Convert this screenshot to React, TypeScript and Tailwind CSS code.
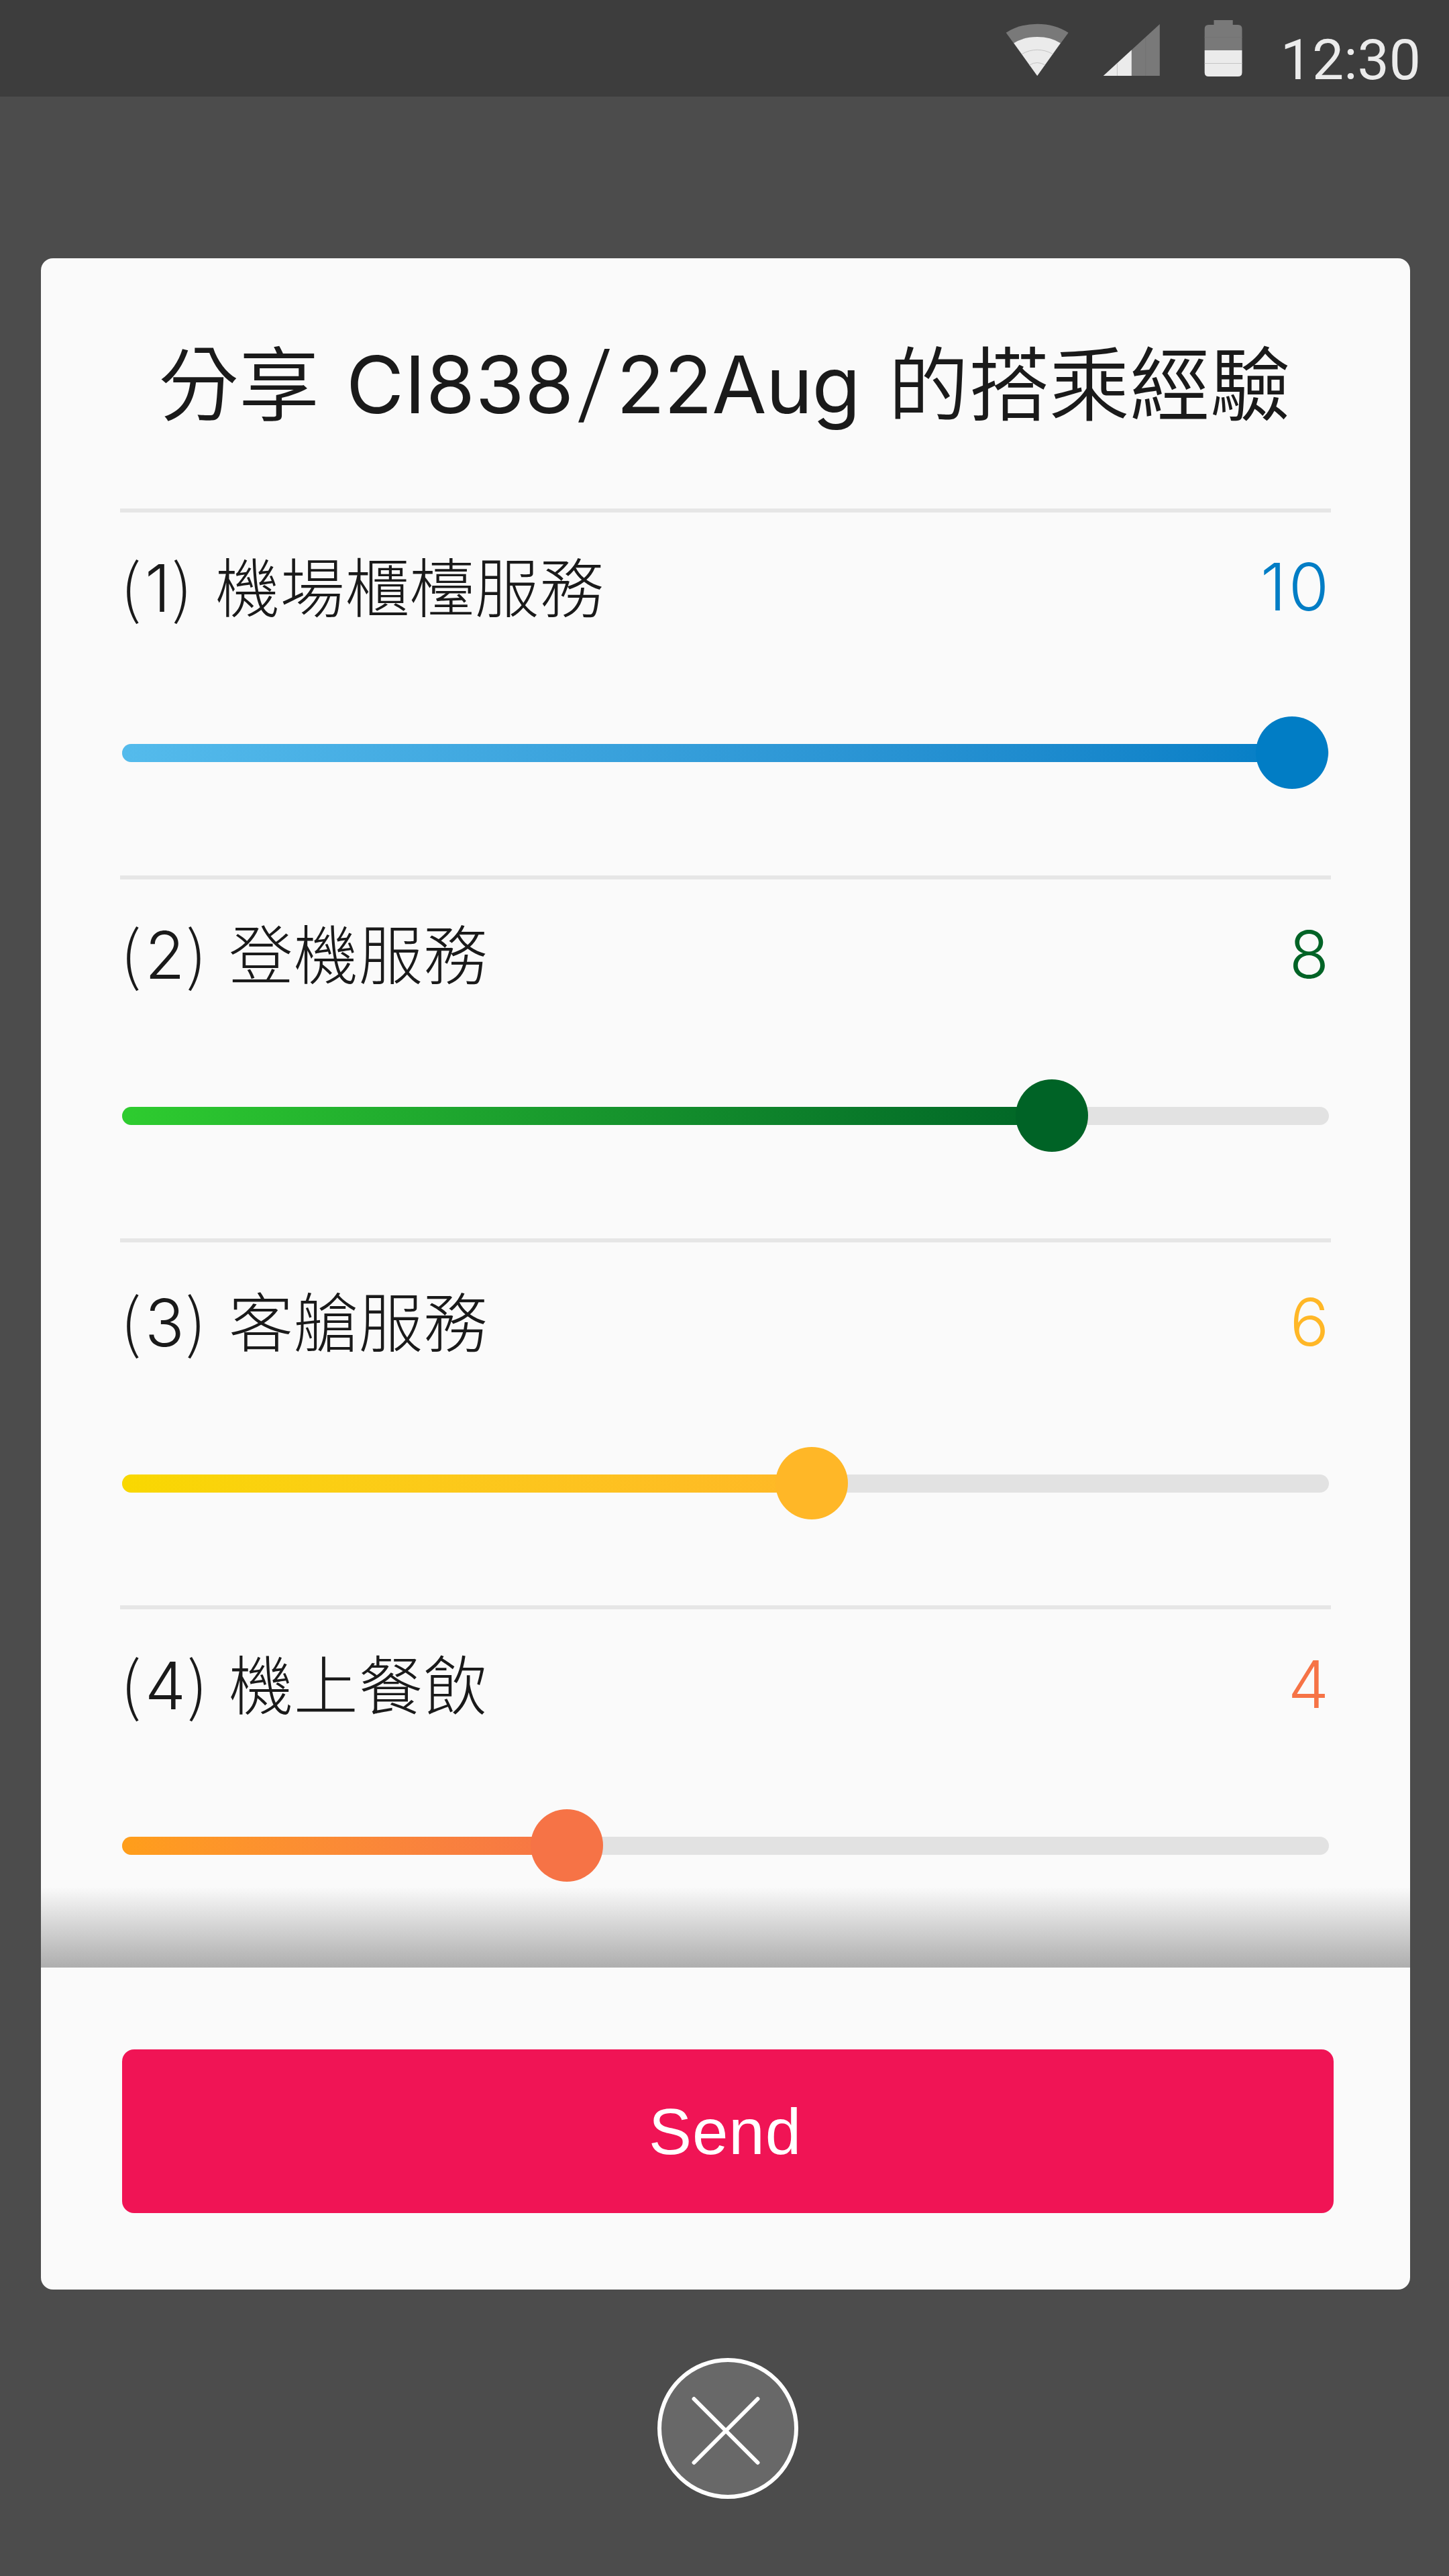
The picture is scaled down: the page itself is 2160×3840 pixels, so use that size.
type Question = {
  index: number;
  label: string;
  score: number;
  rowClass: string;
  indexClass: string;
  valueClass: string;
  sliderClass: string;
  fillClass: string;
  knobClass: string;
  knobCenter: number;
};

const KNOB_SIZE = 108;

const QUESTIONS: Question[] = [
  {
    index: 1,
    label: '機場櫃檯服務',
    score: 10,
    rowClass: 'h-[547px] pt-[59px]',
    indexClass: 'w-[139px]',
    valueClass: 'text-[#017dc5] tracking-[4px] -mr-[4px] -top-[2px]',
    sliderClass: 'mt-[149px]',
    fillClass: 'from-[#54bbec] to-[#017dc5]',
    knobClass: 'bg-[#017dc5]',
    knobCenter: 1744,
  },
  {
    index: 2,
    label: '登機服務',
    score: 8,
    rowClass: 'h-[541px] pt-[59px]',
    indexClass: 'w-[159px]',
    valueClass: 'text-[#006326] -top-[1px]',
    sliderClass: 'mt-[143px]',
    fillClass: 'from-[#2ecc2f] to-[#006326]',
    knobClass: 'bg-[#006326]',
    knobCenter: 1386,
  },
  {
    index: 3,
    label: '客艙服務',
    score: 6,
    rowClass: 'h-[547px] pt-[66px]',
    indexClass: 'w-[159px]',
    valueClass: 'text-[#ffb727] -top-[1px]',
    sliderClass: 'mt-[143px]',
    fillClass: 'from-[#f9d800] to-[#ffb727]',
    knobClass: 'bg-[#ffb727]',
    knobCenter: 1028,
  },
  {
    index: 4,
    label: '機上餐飲',
    score: 4,
    rowClass: 'h-[420px] pt-[60px]',
    indexClass: 'w-[159px]',
    valueClass: 'text-[#f67346] -top-[2px]',
    sliderClass: 'mt-[142px]',
    fillClass: 'from-[#ff9e1a] to-[#f67346]',
    knobClass: 'bg-[#f67346]',
    knobCenter: 663,
  },
];

function StatusBar() {
  return (
    <div className="flex h-[144px] shrink-0 items-start justify-end bg-[#3d3d3d] pr-[42px] text-[#ebebeb]">
      <svg className="mt-[30px] h-[90px] w-[94px]" viewBox="1499 30 94 90">
        <path d="M1546.2 113 L1499.7 48.7 Q1520 35.7 1546.2 35.7 T1592.6 48.7 Z" fill="#797979" />
        <path d="M1546.2 113 L1511.3 64.3 Q1526 55 1546.2 55 T1580.8 64.3 Z" fill="#ebebeb" />
        <path d="M1523.2 80.6 Q1534 74.3 1546.2 74.3 T1569.4 80.6" fill="none" stroke="#c4c4c4" />
        <path d="M1534.5 97 Q1540 93.5 1546.2 93.5 T1558 97" fill="none" stroke="#c4c4c4" />
      </svg>
      <svg className="ml-[51px] mt-[30px] h-[90px] w-[86px]" viewBox="1644 30 86 90">
        <path d="M1644.8 113 L1728.8 36 V113 Z" fill="#797979" />
        <path d="M1644.8 113 L1686.8 74.5 V113 Z" fill="#ebebeb" />
        <path d="M1665.4 94.5 V113" stroke="#c4c4c4" />
        <path d="M1707.8 56 V113" stroke="#737373" />
      </svg>
      <svg className="ml-[65px] mt-[30px] h-[90px] w-[58px]" viewBox="1795 30 58 90">
        <path d="M1809.5 30 H1837.7 V37 H1845.5 Q1851.5 37 1851.5 43 V75 H1795.7 V43 Q1795.7 37 1801.7 37 H1809.5 Z" fill="#797979" />
        <path d="M1795.7 75 H1851.5 V108 Q1851.5 114 1845.5 114 H1801.7 Q1795.7 114 1795.7 108 Z" fill="#ebebeb" />
        <path d="M1795.7 94.5 H1851.5" stroke="#c4c4c4" />
        <path d="M1795.7 55.5 H1851.5" stroke="#737373" />
      </svg>
      <span className="ml-[56px] mt-[48px] font-['Roboto',sans-serif] text-[84px] leading-[84px]">12:30</span>
    </div>
  );
}

function QuestionRow({ q }: { q: Question }) {
  return (
    <section className={`flex flex-col border-t-[6px] border-[#e6e6e6] pl-[3px] pr-[3px] ${q.rowClass}`}>
      <div className="flex h-[96px] items-baseline font-['Noto_Sans_CJK_TC',sans-serif] text-[96px] leading-[96px] font-light text-[#1a1a1a]">
        <span className={`flex shrink-0 items-baseline ${q.indexClass}`}>
          <span className="-ml-[2px] w-[36px]">(</span>
          <span className="font-['Inter',sans-serif] text-[97px]">{q.index}</span>
          <span className="ml-[2px]">)</span>
        </span>
        <span className="grow tracking-[0.7px]">{q.label}</span>
        <span className={`relative font-['Inter',sans-serif] text-[97px] ${q.valueClass}`}>{q.score}</span>
      </div>
      <div className={`relative flex h-[108px] w-[1799px] items-center ${q.sliderClass}`}>
        <div className="h-[27px] w-full overflow-hidden rounded-full bg-[#e2e2e2]">
          <div
            className={`h-full bg-linear-to-r ${q.fillClass}`}
            style={{ width: q.knobCenter + KNOB_SIZE / 4 }}
          />
        </div>
        <div
          className={`absolute top-0 size-[108px] rounded-full ${q.knobClass}`}
          style={{ left: q.knobCenter - KNOB_SIZE / 2 }}
        />
      </div>
    </section>
  );
}

export default function App() {
  return (
    <div className="flex h-[3840px] w-[2160px] flex-col overflow-hidden bg-[#4c4c4c]">
      <StatusBar />
      <main className="ml-[61px] mt-[241px] flex h-[3028px] w-[2041px] shrink-0 flex-col rounded-[18px] bg-[#fafafa]">
        <h1 className="flex h-[373px] items-baseline pl-[175px] pt-[121px] font-[350] leading-[120px] text-[#1a1a1a]">
          <span className="w-[280px] shrink-0 font-['Noto_Sans_CJK_TC',sans-serif] text-[120px]">分享</span>
          <span className="relative -top-[2px] flex w-[808px] shrink-0 items-baseline font-['Inter',sans-serif] text-[118px] font-normal">
            <span className="w-[343px] tracking-[0.6px]">CI838</span>
            <span className="w-[60px] skew-x-[-5deg] pl-[5px] text-[126px] font-light">/</span>
            <span className="tracking-[-0.9px]">22Aug</span>
          </span>
          <span className="shrink-0 font-['Noto_Sans_CJK_TC',sans-serif] text-[120px]">的搭乘經驗</span>
        </h1>
        <div className="ml-[118px] w-[1805px]">
          {QUESTIONS.map((q) => (
            <QuestionRow key={q.index} q={q} />
          ))}
        </div>
        <div className="h-[120px] bg-linear-to-b from-[#fafafa] to-[#aeaeae]" />
        <button className="ml-[121px] mt-[122px] h-[244px] w-[1806px] rounded-[18px] bg-[#f01455] pr-[8px] pt-[2px] font-['Liberation_Sans',Arial,sans-serif] text-[96px] leading-[96px] tracking-[1px] text-white">
          Send
        </button>
      </main>
      <button className="ml-[980px] mt-[102px] flex size-[210px] shrink-0 rounded-full border-[6px] border-white bg-[#686868]">
        <svg className="ml-[45px] mt-[51px] size-[108px]" viewBox="0 0 108 108">
          <path d="M3.5 4 L98.5 99 M98.5 4 L3.5 99" fill="none" stroke="#fff" strokeWidth="6" strokeLinecap="round" />
        </svg>
      </button>
    </div>
  );
}
